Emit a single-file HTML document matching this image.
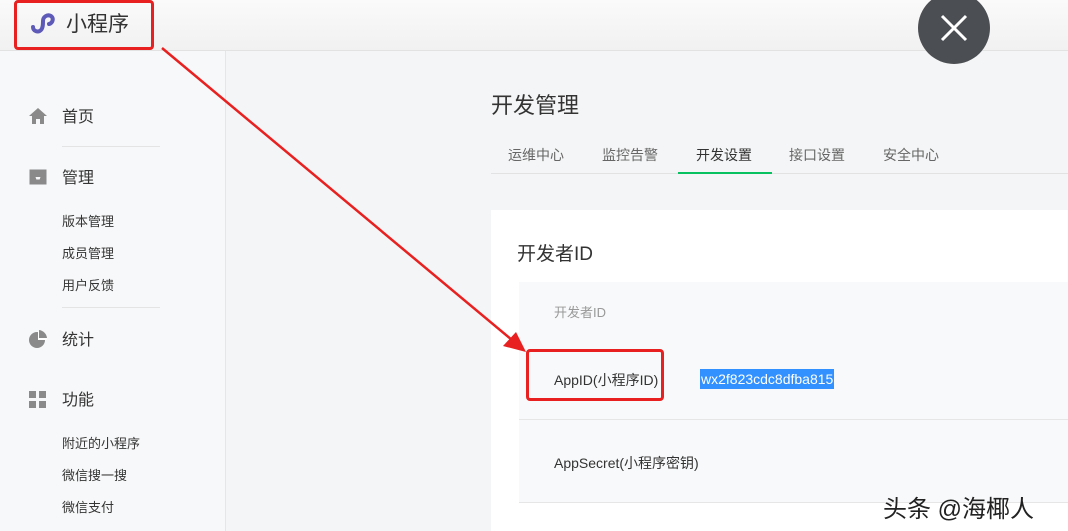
<!DOCTYPE html>
<html><head><meta charset="utf-8"><style>
body{margin:0;width:1068px;height:531px;overflow:hidden;background:#f4f5f6;font-family:"Liberation Sans","Noto Sans CJK SC",sans-serif;position:relative;color:#353535}
.a{position:absolute}
</style></head><body>
<div class="a" style="left:0;top:0;width:1068px;height:50px;background:linear-gradient(#fafafa,#f1f1f1);border-bottom:1px solid #e2e2e2"></div>
<svg class="a" style="left:28px;top:10px" width="30" height="26" viewBox="0 0 30 26"><path d="M5 17c0 4 5 6 8 3c2-2 2-6 2-9c0-4 4-7 8-5c3 2 2 7-2 8" fill="none" stroke="#5e5ab8" stroke-width="4" stroke-linecap="round"/></svg>
<div class="a" style="left:66px;top:8px;font-size:21px;color:#333">小程序</div>
<div class="a" style="left:14px;top:0;width:134px;height:44px;border:3px solid #e82020;border-radius:4px"></div>
<div class="a" style="left:918px;top:-8px;width:72px;height:72px;border-radius:50%;background:#4b4e52"></div>
<svg class="a" style="left:938px;top:12px" width="32" height="32"><path d="M4 4L28 28M28 4L4 28" stroke="#fff" stroke-width="3"/></svg>
<div class="a" style="left:0;top:51px;width:225px;height:480px;background:#f7f8f9;border-right:1px solid #e6e6e6"></div>
<svg class="a" style="left:28px;top:107px" width="20" height="18"><path d="M10 1L1 9h3v8h4v-5h4v5h4V9h3z" fill="#8a8a8a"/></svg>
<div class="a" style="left:62px;top:103px;font-size:16px">首页</div>
<div class="a" style="left:62px;top:146px;width:98px;border-top:1px solid #e4e4e4"></div>
<svg class="a" style="left:28px;top:168px" width="20" height="18"><path d="M2 2h16v14H2z M2 9h5l1 3h4l1-3h5" fill="#8a8a8a" stroke="#8a8a8a"/></svg>
<div class="a" style="left:62px;top:164px;font-size:16px">管理</div>
<div class="a" style="left:62px;top:206px;font-size:13px;line-height:32px">版本管理<br>成员管理<br>用户反馈</div>
<div class="a" style="left:62px;top:307px;width:98px;border-top:1px solid #e4e4e4"></div>
<svg class="a" style="left:28px;top:330px" width="20" height="20"><circle cx="9" cy="10" r="8" fill="#8a8a8a"/><path d="M10 1a9 9 0 0 1 9 9h-9z" fill="#fff"/><path d="M11 0a9 9 0 0 1 8 8h-8z" fill="#8a8a8a"/></svg>
<div class="a" style="left:62px;top:326px;font-size:16px">统计</div>
<svg class="a" style="left:29px;top:391px" width="18" height="18"><rect x="0" y="0" width="7" height="7" fill="#8a8a8a"/><rect x="10" y="0" width="7" height="7" fill="#8a8a8a"/><rect x="0" y="10" width="7" height="7" fill="#8a8a8a"/><rect x="10" y="10" width="7" height="7" fill="#8a8a8a"/></svg>
<div class="a" style="left:62px;top:386px;font-size:16px">功能</div>
<div class="a" style="left:62px;top:428px;font-size:13px;line-height:32px">附近的小程序<br>微信搜一搜<br>微信支付</div>
<div class="a" style="left:491px;top:88px;font-size:22px;color:#333">开发管理</div>
<div class="a" style="left:491px;top:173px;width:577px;border-top:1px solid #e2e2e2"></div>
<div class="a" style="left:508px;top:145px;font-size:14px;color:#666">运维中心</div>
<div class="a" style="left:602px;top:145px;font-size:14px;color:#666">监控告警</div>
<div class="a" style="left:696px;top:145px;font-size:14px;color:#333">开发设置</div>
<div class="a" style="left:678px;top:172px;width:94px;border-top:2px solid #07c160"></div>
<div class="a" style="left:789px;top:145px;font-size:14px;color:#666">接口设置</div>
<div class="a" style="left:883px;top:145px;font-size:14px;color:#666">安全中心</div>
<div class="a" style="left:491px;top:210px;width:577px;height:321px;background:#fff"></div>
<div class="a" style="left:517px;top:239px;font-size:19px;color:#333">开发者ID</div>
<div class="a" style="left:519px;top:282px;width:549px;height:220px;background:#f8f9fa"></div>
<div class="a" style="left:519px;top:419px;width:549px;border-top:1px solid #e6e6e6"></div>
<div class="a" style="left:519px;top:502px;width:549px;border-top:1px solid #e6e6e6"></div>
<div class="a" style="left:554px;top:302px;font-size:13px;color:#999">开发者ID</div>
<div class="a" style="left:554px;top:370px;font-size:14px;color:#333">AppID(小程序ID)</div>
<div class="a" style="left:700px;top:369px;font-size:14px;color:#fff;background:#3390ff;padding:0 1px;line-height:20px">wx2f823cdc8dfba815</div>
<div class="a" style="left:554px;top:453px;font-size:14px;color:#333">AppSecret(小程序密钥)</div>
<div class="a" style="left:526px;top:349px;width:132px;height:46px;border:3px solid #e82020;border-radius:4px"></div>
<svg class="a" style="left:0;top:0" width="1068" height="531"><line x1="162" y1="48" x2="512" y2="340" stroke="#e82020" stroke-width="2.5"/><path d="M526 352L503 346L516 332z" fill="#e82020"/></svg>
<div class="a" style="left:883px;top:489px;font-size:24px;color:#222">头条 @海椰人</div>
</body></html>
